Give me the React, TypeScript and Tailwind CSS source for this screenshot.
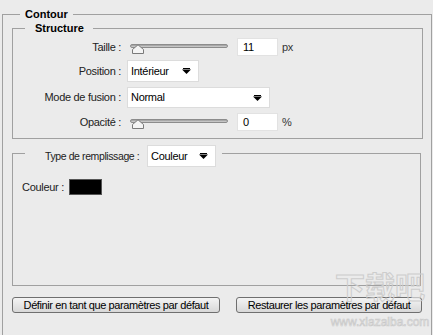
const Arrow = () => (
  <svg width="9" height="6" viewBox="0 0 9 6" className="shrink-0">
    <rect x="1" y="0" width="7" height="1" fill="#000" />
    <path d="M0 1.5 H9 L4.5 6 Z" fill="#000" />
  </svg>
);

const Slider = () => (
  <div className="relative ml-[3px] h-[12px] w-[98px]">
    <div className="absolute left-0 right-0 top-[3px] h-[4px] rounded-full border border-[#8c8c8c] bg-gradient-to-b from-[#9a9a9a] to-[#d4d4d4]" />
    <svg width="14" height="10" viewBox="0 0 14 10" className="absolute left-[1px] top-[3px]">
      <path d="M1.5 9.5 V5.5 L7 0.8 L12.5 5.5 V9.5 Z" fill="#f4f4f4" stroke="#7a7a7a" strokeWidth="1" />
    </svg>
  </div>
);

const NumInput = ({ value, unit }: { value: string; unit: string }) => (
  <div className="flex items-center">
    <div className="ml-[9px] flex h-[18px] w-[41px] items-center border border-[#e2e2e2] bg-white pl-[5px]">
      {value}
    </div>
    <span className="ml-[4px] text-[#333]">{unit}</span>
  </div>
);

const Select = ({ value, width, height }: { value: string; width: string; height: string }) => (
  <div className={`flex items-center justify-between border border-[#dcdcdc] bg-white pl-[3px] pr-[7px] ${width} ${height}`}>
    <span>{value}</span>
    <Arrow />
  </div>
);

const Row = ({ label, className, children }: { label: string; className: string; children: React.ReactNode }) => (
  <div className={`flex items-center ${className}`}>
    <div className="w-[108px] shrink-0 whitespace-nowrap text-right text-[#222]">{label}</div>
    <div className="ml-[6px] flex items-center">{children}</div>
  </div>
);

export default function App() {
  return (
    <div className="relative h-[335px] w-[433px] overflow-hidden bg-[#ebebeb] pl-[2px] pt-[7px] font-['Liberation_Sans',Arial,sans-serif] text-[11px] tracking-[-0.3px] text-black">
      <fieldset className="h-[400px] w-[430px] border border-[#a0a0a0] pl-[9px] pr-[8px]">
        <legend className="ml-[8px] px-[5px] font-bold leading-[14px] tracking-normal">Contour</legend>

        <fieldset className="w-[411px] border border-[#a0a0a0] pb-[7px]">
          <legend className="ml-[12px] pl-[10px] pr-[9px] font-bold leading-[14px] tracking-normal">Structure</legend>
          <Row label="Taille :" className="mt-[3px] h-[18px]">
            <Slider />
            <NumInput value="11" unit="px" />
          </Row>
          <Row label="Position :" className="mt-[4px] h-[22px]">
            <Select value="Intérieur" width="w-[72px]" height="h-[22px]" />
          </Row>
          <Row label="Mode de fusion :" className="mt-[5px] h-[21px]">
            <Select value="Normal" width="w-[143px]" height="h-[21px]" />
          </Row>
          <Row label="Opacité :" className="mt-[5px] h-[18px]">
            <Slider />
            <NumInput value="0" unit="%" />
          </Row>
        </fieldset>

        <fieldset className="mt-[6px] h-[141px] w-[409px] border border-[#a0a0a0] pl-[9px]">
          <legend className="ml-[3px] h-[16px] pl-[20px] pr-[6px]">
            <div className="flex items-start">
              <span className="w-[96px] min-w-0 shrink-0 whitespace-nowrap text-[10.5px] leading-[22px] tracking-[-0.4px] text-[#222]">
                Type de remplissage :
              </span>
              <div className="ml-[6px]">
                <Select value="Couleur" width="w-[69px]" height="h-[22px]" />
              </div>
            </div>
          </legend>
          <div className="mt-[18px] flex items-center">
            <span className="text-[#222]">Couleur :</span>
            <div className="ml-[5px] h-[16px] w-[33px] border border-[#555] bg-black" />
          </div>
        </fieldset>

        <div className="mt-[11px] flex gap-[16px]">
          <button className="h-[16px] w-[208px] whitespace-nowrap rounded-[3px] border border-[#6f6f6f] bg-gradient-to-b from-[#f4f4f4] to-[#d8d8d8] text-[11px] leading-[14px] tracking-[-0.4px] text-black">
            Définir en tant que paramètres par défaut
          </button>
          <button className="h-[16px] w-[186px] whitespace-nowrap rounded-[3px] border border-[#6f6f6f] bg-gradient-to-b from-[#f4f4f4] to-[#d8d8d8] text-[11px] leading-[14px] tracking-[-0.4px] text-black">
            Restaurer les paramètres par défaut
          </button>
        </div>
      </fieldset>

      <div className="pointer-events-none absolute left-[330px] top-[266px] flex w-[100px] flex-col items-center">
        <span className="whitespace-nowrap font-['Noto_Sans_CJK_SC',sans-serif] text-[30px] font-bold leading-[38px] tracking-normal text-transparent [-webkit-text-stroke:1px_#cdcdcd]">
          下载吧
        </span>
        <span className="mt-[12px] whitespace-nowrap font-['Liberation_Sans',Arial,sans-serif] text-[12px] leading-[13px] tracking-normal text-transparent [-webkit-text-stroke:0.6px_#c8c8c8]">
          www.xiazaiba.com
        </span>
      </div>
    </div>
  );
}
